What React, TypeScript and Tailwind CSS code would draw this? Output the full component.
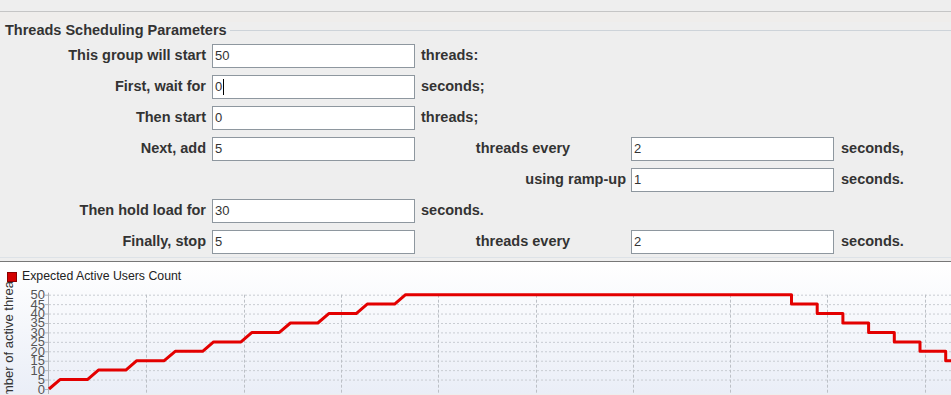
import React from 'react';

const Field = ({ value, caret }: { value: string; caret?: boolean }) => (
  <div className="flex h-[24px] w-[203px] shrink-0 items-center border border-[#8e979f] bg-white pl-[2px] text-[13px] font-normal text-[#333]">
    <span>{value}</span>
    {caret && <span className="ml-px h-[16px] w-px bg-black" />}
  </div>
);

const yv = (v: number) => 107 - v * 1.886;

const buildLine = () => {
  const pts: number[][] = [[49, yv(0)]];
  for (let k = 0; k < 10; k++) {
    const s = 49 + 38.4 * k;
    if (k > 0) pts.push([s, yv(5 * k)]);
    pts.push([s + 11, yv(5 * (k + 1))]);
  }
  for (let j = 0; j < 7; j++) {
    const x = 791.5 + 25.7 * j;
    pts.push([x, yv(50 - 5 * j)]);
    pts.push([x, yv(45 - 5 * j)]);
  }
  pts.push([960, yv(15)]);
  return pts.map((p) => p[0].toFixed(1) + ',' + p[1].toFixed(1)).join(' ');
};

const ticks = [0, 5, 10, 15, 20, 25, 30, 35, 40, 45, 50];
const vgrid = [1, 2, 3, 4, 5, 6, 7, 8, 9].map((k) => 49 + 97.3 * k);

const Chart: React.FC = () => (
  <div className="h-[132px] overflow-hidden bg-linear-to-b from-white to-[#eaeef7] font-normal">
    <div className="flex h-[20px] items-end gap-[5px] pl-[7px]">
      <div className="h-[10px] w-[10px] border border-[#8a0000] bg-[#d40000]" />
      <span className="text-[12.3px] leading-[12px] text-[#222]">Expected Active Users Count</span>
    </div>
    <svg width={951} height={112} viewBox="0 0 951 112" className="block">
      {ticks.slice(1).map((v) => (
        <line key={'h' + v} x1={49} x2={951} y1={yv(v) + 0.5} y2={yv(v) + 0.5} stroke="#c8ccd2" strokeDasharray="2 2" />
      ))}
      {vgrid.map((x) => (
        <line key={'v' + x} x1={Math.round(x) + 0.5} x2={Math.round(x) + 0.5} y1={yv(50)} y2={112} stroke="#bcc0c6" strokeDasharray="3 2" />
      ))}
      <line x1={48.5} x2={48.5} y1={yv(50) - 2} y2={112} stroke="#b0b4ba" />
      {ticks.map((v) => (
        <line key={'t' + v} x1={45} x2={48} y1={yv(v) + 0.5} y2={yv(v) + 0.5} stroke="#b0b4ba" />
      ))}
      {ticks.map((v) => (
        <text key={'l' + v} x={45} y={yv(v) + 4.5} textAnchor="end" fontSize={13} fontWeight={400} fill="#555" fontFamily="'Liberation Sans', Arial, sans-serif">
          {v}
        </text>
      ))}
      <text transform="rotate(-90)" x={-58} y={12.5} textAnchor="middle" fontSize={13} fontWeight={400} fill="#333" fontFamily="'Liberation Sans', Arial, sans-serif">
        Number of active threads
      </text>
      <polyline points={buildLine()} fill="none" stroke="#e30000" strokeWidth={3} strokeLinejoin="round" />
    </svg>
  </div>
);

const App: React.FC = () => {
  const label = "w-[206px] shrink-0 text-right";
  const row = "flex h-[24px] items-center";
  return (
    <div className="h-[395px] w-[951px] overflow-hidden bg-[#eeeeee] font-['Liberation_Sans',Arial,sans-serif] text-[14.5px] font-bold text-[#333]">
      <div className="h-[11px]" />
      <div className="h-px bg-[#c5c5c5]" />
      <div className="h-[10px] bg-[#efedeb]" />
      <div className="flex h-[16px] items-center">
        <span className="pl-[5px] pr-[3px] leading-[16px]">Threads Scheduling Parameters</span>
        <div className="h-px flex-1 bg-[#cdd3d9]" />
      </div>
      <div className="flex flex-col gap-[7px] pt-[6px]">
        <div className={row}>
          <div className={label}>This group will start</div>
          <div className="ml-[6px]"><Field value="50" /></div>
          <div className="ml-[6px]">threads:</div>
        </div>
        <div className={row}>
          <div className={label}>First, wait for</div>
          <div className="ml-[6px]"><Field value="0" caret /></div>
          <div className="ml-[6px]">seconds;</div>
        </div>
        <div className={row}>
          <div className={label}>Then start</div>
          <div className="ml-[6px]"><Field value="0" /></div>
          <div className="ml-[6px]">threads;</div>
        </div>
        <div className={row}>
          <div className={label}>Next, add</div>
          <div className="ml-[6px]"><Field value="5" /></div>
          <div className="w-[216px] shrink-0 text-center">threads every</div>
          <Field value="2" />
          <div className="ml-[7px]">seconds,</div>
        </div>
        <div className={row}>
          <div className="w-[415px] shrink-0" />
          <div className="w-[216px] shrink-0 pr-[5px] text-right">using ramp-up</div>
          <Field value="1" />
          <div className="ml-[7px]">seconds.</div>
        </div>
        <div className={row}>
          <div className={label}>Then hold load for</div>
          <div className="ml-[6px]"><Field value="30" /></div>
          <div className="ml-[6px]">seconds.</div>
        </div>
        <div className={row}>
          <div className={label}>Finally, stop</div>
          <div className="ml-[6px]"><Field value="5" /></div>
          <div className="w-[216px] shrink-0 text-center">threads every</div>
          <Field value="2" />
          <div className="ml-[7px]">seconds.</div>
        </div>
      </div>
      <div className="h-[3px]" />
      <div className="h-px bg-[#dde2e7]" />
      <div className="h-[3px]" />
      <div className="h-px bg-[#777]" />
      <Chart />
    </div>
  );
};

export default App;
